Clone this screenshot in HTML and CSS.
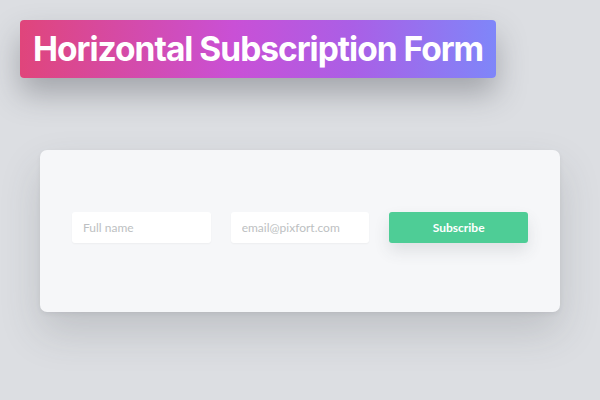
FILE: index.html
```html
<!DOCTYPE html>
<html>
<head>
<meta charset="utf-8">
<link rel="stylesheet" href="styles.css">
</head>
<body>
<div class="page">
  <h1 class="badge">Horizontal Subscription Form</h1>
  <div class="card">
    <form class="form">
      <input class="field" type="text" placeholder="Full name">
      <input class="field" type="email" placeholder="email@pixfort.com">
      <button class="btn" type="button">Subscribe</button>
    </form>
  </div>
</div>
</body>
</html>
```
FILE: styles.css
```css
html, body {
  margin: 0;
  padding: 0;
}
body {
  width: 600px;
  height: 400px;
  overflow: hidden;
  background: #dcdee2;
  font-family: "Lato", "Open Sans", sans-serif;
}
.page {
  padding: 20px 40px 0 20px;
  display: flex;
  flex-direction: column;
  align-items: flex-start;
}
.badge {
  margin: 0;
  height: 58px;
  box-sizing: border-box;
  padding: 0 13px;
  display: flex;
  align-items: center;
  border-radius: 4px;
  background: linear-gradient(90deg, #e0457b 0%, #c950d6 45%, #aa5fe6 70%, #7f86f9 100%);
  color: #fff;
  font-family: "Inter", sans-serif;
  font-weight: 700;
  font-size: 33.5px;
  letter-spacing: -1px;
  box-shadow: 0 16px 30px rgba(60, 64, 72, 0.35);
}
.card {
  margin: 72px 0 0 20px;
  width: 520px;
  height: 162px;
  box-sizing: border-box;
  background: #f6f7f9;
  border-radius: 7px;
  padding: 62px 32px 0 32px;
  box-shadow: 0 20px 40px rgba(60, 64, 72, 0.18), 0 2px 4px rgba(60, 64, 72, 0.08);
}
.form {
  display: grid;
  grid-template-columns: 1fr 1fr 1fr;
  column-gap: 20px;
}
.field {
  height: 31px;
  box-sizing: border-box;
  border: none;
  border-radius: 3px;
  background: #ffffff;
  padding: 0 11px;
  font-family: "Lato", sans-serif;
  font-size: 12px;
  color: #555;
  box-shadow: 0 1px 2px rgba(0, 0, 0, 0.04);
  outline: none;
  min-width: 0;
}
.field::placeholder {
  color: #bdbfc2;
}
.btn {
  height: 31px;
  border: none;
  border-radius: 3px;
  background: #4ecd96;
  color: #fff;
  font-family: "Lato", sans-serif;
  font-weight: 700;
  font-size: 12px;
  box-shadow: 0 8px 16px rgba(60, 64, 72, 0.12);
  cursor: pointer;
}
```
